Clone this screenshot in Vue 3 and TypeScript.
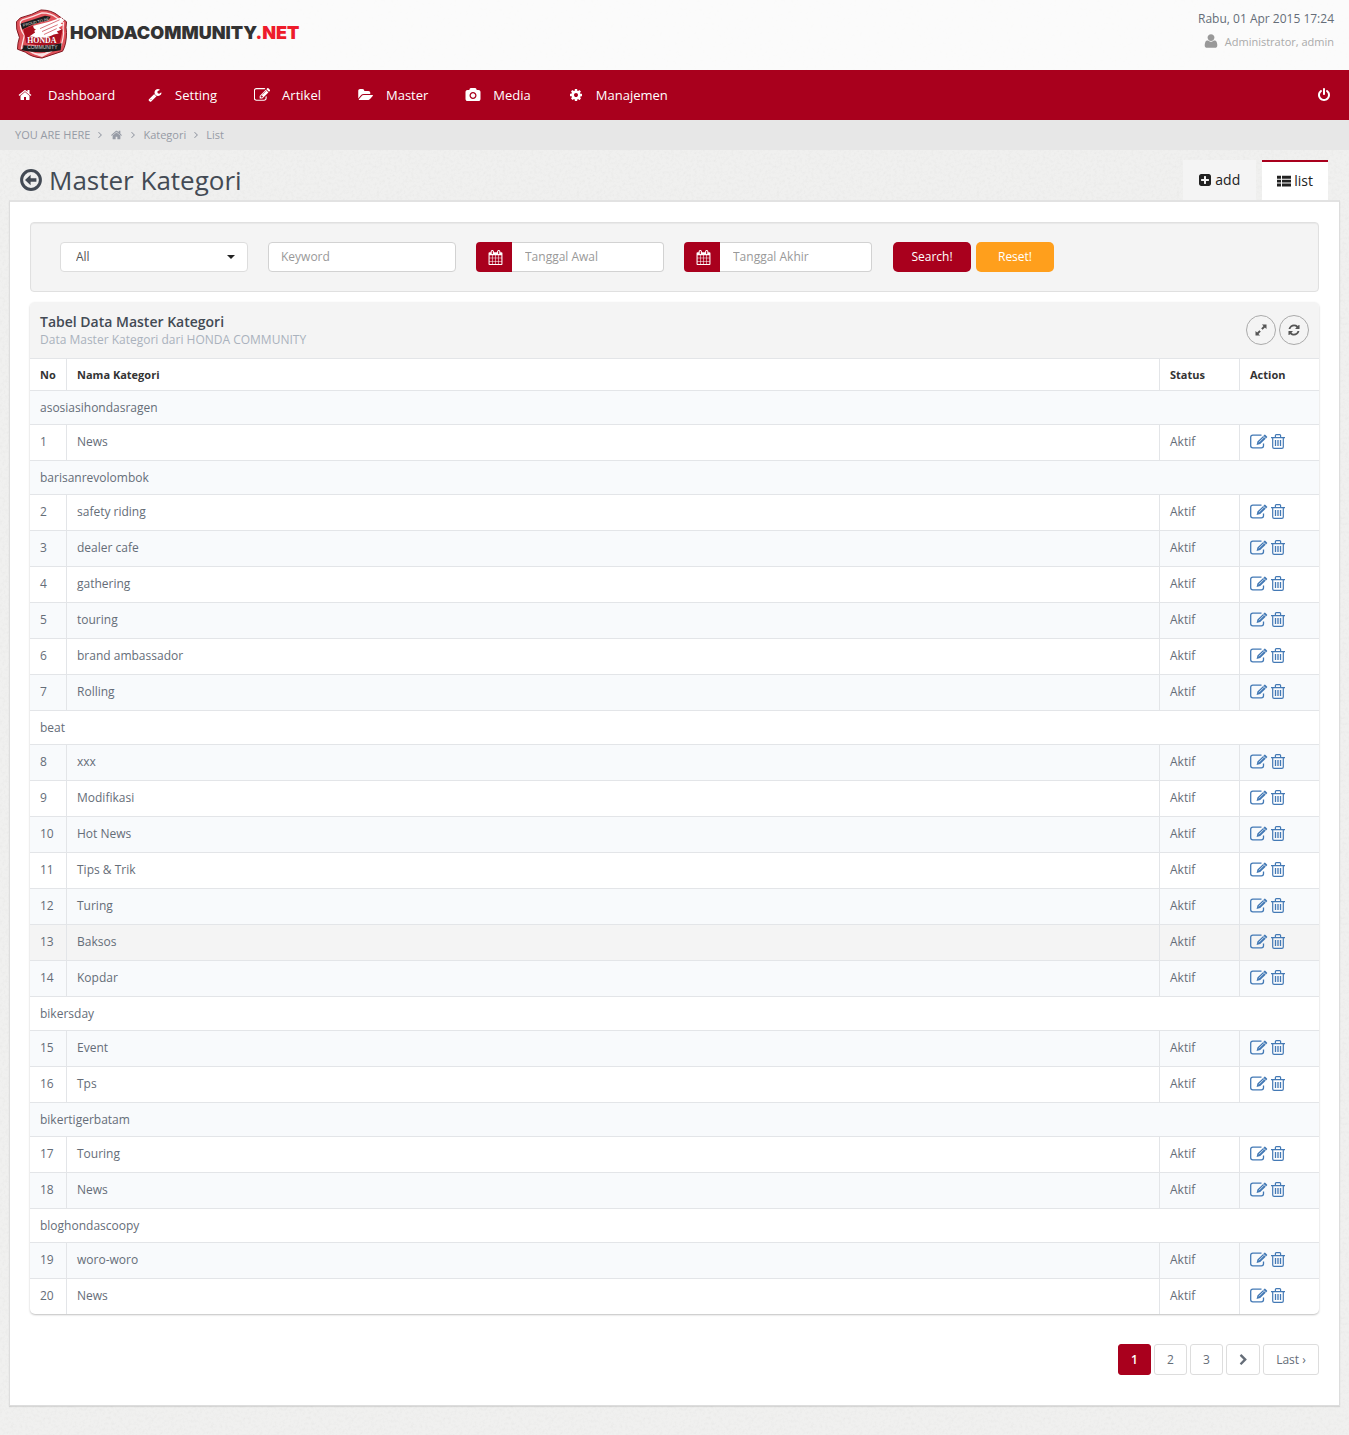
<script setup lang="ts">
import { ref } from 'vue'

interface MenuItem {
  label: string
  icon: string
  box: string
}

interface Row {
  no?: number
  name: string
  hovered?: boolean
}

const icons: Record<string, string> = {
  home: 'M1472 992v480q0 26-19 45t-45 19h-384v-384h-256v384h-384q-26 0-45-19t-19-45v-480q0-1 .5-3t.5-3l575-474 575 474q1 2 1 6zm223-69l-62 74q-8 9-21 11h-3q-13 0-21-7l-692-577-692 577q-12 8-24 7-13-2-21-11l-62-74q-8-10-7-23.5t11-21.5l719-599q32-26 76-26t76 26l244 204v-195q0-14 9-23t23-9h192q14 0 23 9t9 23v408l219 182q10 8 11 21.5t-7 23.5z',
  wrench: 'M448 1472q0-26-19-45t-45-19-45 19-19 45 19 45 45 19 45-19 19-45zm644-420l-682 682q-37 37-90 37-52 0-91-37l-106-108q-38-36-38-90 0-53 38-91l681-681q39 98 114.5 173.5t173.5 114.5zm634-435q0 39-23 106-47 134-164.5 217.5t-258.5 83.5q-185 0-316.5-131.5t-131.5-316.5 131.5-316.5 316.5-131.5q58 0 121.5 16.5t107.5 46.5q16 11 16 28t-16 28l-293 169v224l193 107q5-3 79-48.5t135.5-81 70.5-35.5q15 0 23.5 10t8.5 25z',
  edit: 'M888 1184l116-116-152-152-116 116v56h96v96h56zm440-720q-16-16-33 1l-350 350q-17 17-1 33t33-1l350-350q17-17 1-33zm80 594v190q0 119-84.5 203.5t-203.5 84.5h-832q-119 0-203.5-84.5t-84.5-203.5v-832q0-119 84.5-203.5t203.5-84.5h832q63 0 117 25 15 7 18 23 3 17-9 29l-49 49q-14 14-32 8-23-6-45-6h-832q-66 0-113 47t-47 113v832q0 66 47 113t113 47h832q66 0 113-47t47-113v-126q0-13 9-22l64-64q15-15 35-7t20 29zm-96-738l288 288-672 672h-288v-288zm444 132l-92 92-288-288 92-92q28-28 68-28t68 28l152 152q28 28 28 68t-28 68z',
  folder: 'M1815 952q0 31-31 66l-336 396q-43 51-120.5 86.5t-143.5 35.5h-1088q-34 0-60.5-13t-26.5-43q0-31 31-66l336-396q43-51 120.5-86.5t143.5-35.5h1088q34 0 60.5 13t26.5 43zm-343-344v160h-832q-94 0-197 47.5t-164 119.5l-337 396-5 6q0-4-.5-12.5t-.5-12.5v-960q0-92 66-158t158-66h320q92 0 158 66t66 158v32h544q92 0 158 66t66 158z',
  camera: 'M896 672q119 0 203.5 84.5t84.5 203.5-84.5 203.5-203.5 84.5-203.5-84.5-84.5-203.5 84.5-203.5 203.5-84.5zm704-416q106 0 181 75t75 181v896q0 106-75 181t-181 75h-1408q-106 0-181-75t-75-181v-896q0-106 75-181t181-75h224l51-136q19-49 69.5-84.5t103.5-35.5h512q53 0 103.5 35.5t69.5 84.5l51 136h224zm-704 1152q185 0 316.5-131.5t131.5-316.5-131.5-316.5-316.5-131.5-316.5 131.5-131.5 316.5 131.5 316.5 316.5 131.5z',
  cog: 'M1152 896q0-106-75-181t-181-75-181 75-75 181 75 181 181 75 181-75 75-181zm512-109v222q0 12-8 23t-20 13l-185 28q-19 54-39 91 35 50 107 138 10 12 10 25t-9 23q-27 37-99 108t-94 71q-12 0-26-9l-138-108q-44 23-91 38-16 136-29 186-7 28-36 28h-222q-14 0-24.5-8.5t-11.5-21.5l-28-184q-49-16-90-37l-141 107q-10 9-25 9-14 0-25-11-126-114-165-168-7-10-7-23 0-12 8-23 15-21 51-66.5t54-70.5q-27-50-41-99l-183-27q-13-2-21-12.5t-8-23.5v-222q0-12 8-23t19-13l186-28q14-46 39-92-40-57-107-138-10-12-10-24 0-10 9-23 26-36 98.5-107.5t94.5-71.5q13 0 26 10l138 107q44-23 91-38 16-136 29-186 7-28 36-28h222q14 0 24.5 8.5t11.5 21.5l28 184q49 16 90 37l142-107q9-9 24-9 13 0 25 10 129 119 165 170 7 8 7 22 0 12-8 23-15 21-51 66.5t-54 70.5q26 50 41 98l183 28q13 2 21 12.5t8 23.5z',
  power: 'M1664 896q0 156-61 298t-164 245-245 164-298 61-298-61-245-164-164-245-61-298q0-182 80.5-343t226.5-270q43-32 95.5-25t83.5 50q32 42 24.5 94.5t-49.5 84.5q-98 74-151.5 181t-53.5 228q0 104 40.5 198.5t109.5 163.5 163.5 109.5 198.5 40.5 198.5-40.5 163.5-109.5 109.5-163.5 40.5-198.5q0-121-53.5-228t-151.5-181q-42-32-49.5-84.5t24.5-94.5q31-43 84-50t95 25q146 109 226.5 270t80.5 343zm-640-768v640q0 52-38 90t-90 38-90-38-38-90v-640q0-52 38-90t90-38 90 38 38 90z',
  user: 'M1600 1405q0 120-73 189.5t-194 69.5h-874q-121 0-194-69.5t-73-189.5q0-53 3.5-103.5t14-109 26.5-108.5 43-97.5 62-81 85.5-53.5 111.5-20q9 0 42 21.5t74.5 48 108 48 133.5 21.5 133.5-21.5 108-48 74.5-48 42-21.5q61 0 111.5 20t85.5 53.5 62 81 43 97.5 26.5 108.5 14 109 3.5 103.5zm-320-893q0 159-112.5 271.5t-271.5 112.5-271.5-112.5-112.5-271.5 112.5-271.5 271.5-112.5 271.5 112.5 112.5 271.5z',
  angle: 'M1171 960q0 13-10 23l-466 466q-10 10-23 10t-23-10l-50-50q-10-10-10-23t10-23l393-393-393-393q-10-10-10-23t10-23l50-50q10-10 23-10t23 10l466 466q10 10 10 23z',
  plus: 'M1408 960v-128q0-26-19-45t-45-19h-320v-320q0-26-19-45t-45-19h-128q-26 0-45 19t-19 45v320h-320q-26 0-45 19t-19 45v128q0 26 19 45t45 19h320v320q0 26 19 45t45 19h128q26 0 45-19t19-45v-320h320q26 0 45-19t19-45zm256-544v960q0 119-84.5 203.5t-203.5 84.5h-960q-119 0-203.5-84.5t-84.5-203.5v-960q0-119 84.5-203.5t203.5-84.5h960q119 0 203.5 84.5t84.5 203.5z',
  refresh: 'M1639 1056q0 5-1 7-64 268-268 434.5t-478 166.5q-146 0-282.5-55t-243.5-157l-129 129q-19 19-45 19t-45-19-19-45v-448q0-26 19-45t45-19h448q26 0 45 19t19 45-19 45l-137 137q71 66 161 102t187 36q134 0 250-65t186-179q11-17 53-117 8-23 30-23h192q13 0 22.5 9.5t9.5 22.5zm25-800v448q0 26-19 45t-45 19h-448q-26 0-45-19t-19-45 19-45l138-138q-148-137-349-137-134 0-250 65t-186 179q-11 17-53 117-8 23-30 23h-199q-13 0-22.5-9.5t-9.5-22.5v-7q65-268 270-434.5t480-166.5q146 0 284 55.5t245 156.5l130-129q19-19 45-19t45 19 19 45z',
  calendar: 'M192 1664h288v-288h-288v288zm352 0h320v-288h-320v288zm-352-352h288v-320h-288v320zm352 0h320v-320h-320v320zm-352-384h288v-288h-288v288zm736 736h320v-288h-320v288zm-384-736h320v-288h-320v288zm768 736h288v-288h-288v288zm-384-352h320v-320h-320v320zm-352-864v-288q0-13-9.5-22.5t-22.5-9.5h-64q-13 0-22.5 9.5t-9.5 22.5v288q0 13 9.5 22.5t22.5 9.5h64q13 0 22.5-9.5t9.5-22.5zm736 864h288v-320h-288v320zm-384-384h320v-288h-320v288zm384 0h288v-288h-288v288zm32-480v-288q0-13-9.5-22.5t-22.5-9.5h-64q-13 0-22.5 9.5t-9.5 22.5v288q0 13 9.5 22.5t22.5 9.5h64q13 0 22.5-9.5t9.5-22.5zm384-64v1280q0 52-38 90t-90 38h-1408q-52 0-90-38t-38-90v-1280q0-52 38-90t90-38h128v-96q0-66 47-113t113-47h64q66 0 113 47t47 113v96h384v-96q0-66 47-113t113-47h64q66 0 113 47t47 113v96h128q52 0 90 38t38 90z',
  chevron: 'M1363 877l-742 742q-19 19-45 19t-45-19l-166-166q-19-19-19-45t19-45l531-531-531-531q-19-19-19-45t19-45l166-166q19-19 45-19t45 19l742 742q19 19 19 45t-19 45z',
}

const menu: MenuItem[] = [
  { label: 'Dashboard', icon: 'home', box: '0 0 1792 1792' },
  { label: 'Setting', icon: 'wrench', box: '0 0 1792 1792' },
  { label: 'Artikel', icon: 'edit', box: '64 128 1664 1536' },
  { label: 'Master', icon: 'folder', box: '0 0 1856 1792' },
  { label: 'Media', icon: 'camera', box: '-64 0 1920 1792' },
  { label: 'Manajemen', icon: 'cog', box: '0 0 1792 1792' },
]

const rows: Row[] = [
  { name: 'asosiasihondasragen' },
  { no: 1, name: 'News' },
  { name: 'barisanrevolombok' },
  { no: 2, name: 'safety riding' },
  { no: 3, name: 'dealer cafe' },
  { no: 4, name: 'gathering' },
  { no: 5, name: 'touring' },
  { no: 6, name: 'brand ambassador' },
  { no: 7, name: 'Rolling' },
  { name: 'beat' },
  { no: 8, name: 'xxx' },
  { no: 9, name: 'Modifikasi' },
  { no: 10, name: 'Hot News' },
  { no: 11, name: 'Tips & Trik' },
  { no: 12, name: 'Turing' },
  { no: 13, name: 'Baksos', hovered: true },
  { no: 14, name: 'Kopdar' },
  { name: 'bikersday' },
  { no: 15, name: 'Event' },
  { no: 16, name: 'Tps' },
  { name: 'bikertigerbatam' },
  { no: 17, name: 'Touring' },
  { no: 18, name: 'News' },
  { name: 'bloghondascoopy' },
  { no: 19, name: 'woro-woro' },
  { no: 20, name: 'News' },
]

const status = ref('All')
const keyword = ref('')
const dateFrom = ref('')
const dateTo = ref('')

function reset(): void {
  status.value = 'All'
  keyword.value = ''
  dateFrom.value = ''
  dateTo.value = ''
}
</script>

<template>
  <div class="page">
    <header class="top">
      <a class="brand" href="#">
        <svg class="badge" viewBox="0 0 54 52" aria-hidden="true">
          <path d="M5 9Q17 6 26 1q11 0 18 6l8 6q-1 6 0 11 0 12-4 19-9 3-21 7-11-1-17-6l-8-3q0-6 2-12Q0 20 1 13z" fill="#e0525a" stroke="#7d1620" stroke-width="1" />
          <path d="M7 11Q18 8 27 4q9 0 15 5l7 5q-1 6 0 11-1 10-4 15-9 2-18 7-9-1-14-5l-7-2 3-13Q4 20 5 13z" fill="none" stroke="#fbe3e4" stroke-width="1.3" />
          <path d="M8 21q8-5 19-5 12 0 21 5l-3 14-17 3-17-3z" fill="#a80f1e" />
          <path d="M5 15Q18 11 30 7l6 1-3 4Q19 14 7 21z" fill="#1b1b1b" />
          <path d="M8 37q15 2 39-2l-1 7q-20 4-40 0l2-3z" fill="#1b1b1b" />
          <path d="M49 8Q34 14 18 17q0 3 3 4-3 1-1 3l-6 4 13 1q7 0 12-3l5-1-2-2 5-2-3-2 5-3-3-1 4-4-3-1z" fill="#fff" />
          <path d="M25 20l20-9M27 23l16-7M29 26l13-6" stroke="#d8737a" stroke-width="1" />
          <path d="M16 45q11 1 22-2l-11 6z" fill="#f7e2e3" />
          <text x="12" y="35" font-family="Liberation Serif, serif" font-weight="700" font-size="8" fill="#fff">HONDA</text>
          <text x="12" y="41" font-family="Liberation Sans, sans-serif" font-size="5" fill="#ddd">COMMUNITY</text>
          <text x="8" y="18" transform="rotate(-14 8 18)" font-family="Liberation Sans, sans-serif" font-size="4" fill="#ddd">PROUD TO BE</text>
        </svg>
        <span class="wordmark">HONDACOMMUNITY<span class="net">.NET</span></span>
      </a>
      <div class="session">
        <span class="date">Rabu, 01 Apr 2015 17:24</span>
        <span class="account">
          <svg class="user" viewBox="0 0 1792 1792"><path :d="icons.user" /></svg>
          Administrator, admin
        </span>
      </div>
    </header>

    <nav class="menu">
      <a v-for="item in menu" :key="item.label" href="#">
        <svg class="mi" :viewBox="item.box"><path :d="icons[item.icon]" /></svg>{{ item.label }}
      </a>
      <button class="logout" type="button" aria-label="Logout">
        <svg class="mi" viewBox="0 0 1792 1792"><path :d="icons.power" /></svg>
      </button>
    </nav>

    <nav class="crumbs">
      <span>YOU ARE HERE</span>
      <svg class="sep" viewBox="400 356 960 1208"><path :d="icons.angle" /></svg>
      <a href="#" aria-label="Home"><svg class="crumb-home" viewBox="0 0 1792 1792"><path :d="icons.home" /></svg></a>
      <svg class="sep" viewBox="400 356 960 1208"><path :d="icons.angle" /></svg>
      <a href="#">Kategori</a>
      <svg class="sep" viewBox="400 356 960 1208"><path :d="icons.angle" /></svg>
      <a href="#">List</a>
    </nav>

    <div class="heading">
      <h1>
        <svg class="back" viewBox="0 0 22 22">
          <circle cx="11" cy="11" r="9.4" fill="none" stroke="#434a54" stroke-width="3" />
          <path d="M5 11l5.6-5.200v3.500h5.800v3.400h-5.800v3.500z" />
        </svg>
        Master Kategori
      </h1>
      <div class="tabs">
        <a class="tab" href="#"><svg class="ti" viewBox="128 128 1536 1536"><path :d="icons.plus" /></svg>add</a>
        <a class="tab active" href="#">
          <svg class="ti list" viewBox="0 0 14 12">
            <path d="M0 .8h4v2.9H0zM5 .8h9v2.9H5zM0 4.7h4v2.9H0zM5 4.7h9v2.9H5zM0 8.6h4v2.9H0zM5 8.6h9v2.9H5z" />
          </svg>list
        </a>
      </div>
    </div>

    <main class="panel">
      <form class="filter" @submit.prevent>
        <select v-model="status" class="field" aria-label="Status">
          <option>All</option>
          <option>Aktif</option>
        </select>
        <label class="group">
          <input v-model="keyword" type="text" placeholder="Keyword" aria-label="Keyword" />
        </label>
        <label class="group dated">
          <span class="addon"><svg viewBox="0 0 1792 1792"><path :d="icons.calendar" /></svg></span>
          <input v-model="dateFrom" type="text" placeholder="Tanggal Awal" aria-label="Tanggal Awal" />
        </label>
        <label class="group dated">
          <span class="addon"><svg viewBox="0 0 1792 1792"><path :d="icons.calendar" /></svg></span>
          <input v-model="dateTo" type="text" placeholder="Tanggal Akhir" aria-label="Tanggal Akhir" />
        </label>
        <div class="buttons">
          <button class="btn search" type="submit">Search!</button>
          <button class="btn reset" type="button" @click="reset">Reset!</button>
        </div>
      </form>

      <section class="card">
        <div class="card-head">
          <div>
            <h2>Tabel Data Master Kategori</h2>
            <p>Data Master Kategori dari HONDA COMMUNITY</p>
          </div>
          <div class="tools">
            <button type="button" aria-label="Expand">
              <svg viewBox="0 0 12 12"><path d="M11.5.5v4.600L9.900 3.500 7.600 5.800 6.200 4.400l2.300-2.300L6.900.5zM.5 11.500V6.900l1.600 1.600 2.300-2.300 1.400 1.400-2.300 2.300 1.600 1.600z" /></svg>
            </button>
            <button type="button" aria-label="Refresh">
              <svg viewBox="64 64 1664 1664"><path :d="icons.refresh" /></svg>
            </button>
          </div>
        </div>
        <table>
          <thead>
            <tr>
              <th class="no">No</th>
              <th>Nama Kategori</th>
              <th class="narrow">Status</th>
              <th class="narrow">Action</th>
            </tr>
          </thead>
          <tbody>
            <tr v-for="(row, i) in rows" :key="i" :class="{ hovered: row.hovered, site: !row.no }">
              <td v-if="!row.no" colspan="4">{{ row.name }}</td>
              <template v-else>
                <td>{{ row.no }}</td>
                <td>{{ row.name }}</td>
                <td>Aktif</td>
                <td>
                  <div class="actions">
                    <a href="#" aria-label="Edit">
                      <svg class="pen" viewBox="0 0 18 15" fill="none" stroke="currentColor">
                        <path d="M11.5 1.2H2.8Q.7 1.2.7 3.2v8.600q0 2 2.100 2h8.600q2.100 0 2.100-2V9.500" stroke-width="1.3" />
                        <path class="solid" d="M6.600 11l.8-3.400L14.200.9q.5-.5 1-.1l1.800 1.700q.5.5 0 1L10.200 10z" />
                        <path d="M8.900 8.300l5-5M13.200 1.900l2.900 2.800" stroke="#fff" stroke-width=".7" />
                      </svg>
                    </a>
                    <a href="#" aria-label="Delete">
                      <svg class="bin" viewBox="0 0 14 15" fill="none" stroke="currentColor">
                        <path d="M0 3.600h14M4.400 3.200V1.600q0-.9.9-.9h3.400q.9 0 .9.9v1.600M1.700 4v8.900q0 1.400 1.400 1.400h7.800q1.400 0 1.400-1.400V4" stroke-width="1.2" />
                        <path d="M4.500 6v6M7 6v6M9.500 6v6" stroke-width="1.3" />
                      </svg>
                    </a>
                  </div>
                </td>
              </template>
            </tr>
          </tbody>
        </table>
      </section>

      <nav class="pager" aria-label="Pagination">
        <a class="current" href="#">1</a>
        <a href="#">2</a>
        <a href="#">3</a>
        <a class="next" href="#" aria-label="Next"><svg viewBox="256 0 1280 1792"><path :d="icons.chevron" /></svg></a>
        <a class="last" href="#">Last ›</a>
      </nav>
    </main>
  </div>
</template>

<style>
body {
  background-color: #f0f0ef;
  background-image: url("data:image/svg+xml,%3Csvg xmlns='http://www.w3.org/2000/svg' width='200' height='200'%3E%3Cfilter id='n'%3E%3CfeTurbulence type='fractalNoise' baseFrequency='.35' numOctaves='3' stitchTiles='stitch'/%3E%3CfeColorMatrix values='0 0 0 0 .4 0 0 0 0 .4 0 0 0 0 .38 .2 0 0 0 -.09'/%3E%3C/filter%3E%3Crect width='200' height='200' filter='url(%23n)'/%3E%3C/svg%3E");
}
</style>

<style scoped>
* {
  box-sizing: border-box;
}

.page {
  padding-bottom: 29px;
  font: 12px/18px "Open Sans", sans-serif;
  color: #656d78;
}

a {
  color: inherit;
  text-decoration: none;
}

svg {
  display: block;
  flex: none;
}

svg:not([fill], .badge) path,
.solid {
  fill: currentColor;
}

.solid {
  stroke: none;
}

button,
input,
select {
  font: inherit;
  margin: 0;
}

.top {
  display: flex;
  justify-content: space-between;
  height: 70px;
  padding: 9px 15px;
  background: rgba(255, 255, 255, 0.75);
}

.brand {
  display: flex;
  gap: 1px;
}

.badge {
  width: 54px;
  height: 51px;
}

.wordmark {
  font: 900 18px/48px Inter, "Liberation Sans", sans-serif;
  color: #333;
}

.net {
  color: #ee1c2b;
}

.session {
  display: flex;
  flex-direction: column;
  align-items: flex-end;
  gap: 5px;
  padding-top: 1px;
}

.account {
  display: flex;
  gap: 6px;
  font-size: 11px;
  color: #aaa;
}

.user {
  width: 16px;
  height: 16px;
  color: #999;
}

.menu {
  display: flex;
  align-items: center;
  gap: 37px;
  height: 50px;
  padding: 0 17px;
  background: #a9001d;
  color: #fff;
  font-size: 13px;
}

.menu a {
  display: flex;
  align-items: center;
  gap: 12px;
}

.menu a:first-child {
  gap: 15px;
  margin-right: -5px;
}

.mi {
  width: 16px;
  height: 14px;
}

.logout {
  margin-left: auto;
  padding: 0;
  border: 0;
  background: none;
  color: #fff;
}

.crumbs {
  display: flex;
  align-items: center;
  gap: 7px;
  height: 30px;
  padding: 0 15px;
  background: #e7e7e7;
  color: #969ba5;
  font-size: 11px;
}

.sep {
  width: 6px;
  height: 8px;
}

.crumb-home {
  width: 13px;
  height: 12px;
}

.heading {
  display: flex;
  justify-content: space-between;
  align-items: flex-end;
  height: 50px;
  padding: 0 21px 0 20px;
}

h1 {
  display: flex;
  align-items: center;
  gap: 7px;
  margin: 0;
  font-size: 26px;
  line-height: 40px;
  font-weight: 400;
  color: #434a54;
}

.back {
  width: 22px;
  height: 22px;
}

.tabs {
  display: flex;
  gap: 6px;
  font-size: 14px;
  color: #222;
}

.tab {
  display: flex;
  align-items: center;
  gap: 4px;
  height: 40px;
  padding: 0 16px;
  background: #f4f4f4;
}

.tab.active {
  gap: 3px;
  padding: 0 15px;
  background: #fff;
  border-top: 2px solid #a9001d;
}

.ti {
  width: 12px;
  height: 12px;
}

.ti.list {
  width: 14px;
}

.panel {
  margin: 0 9px;
  padding: 20px;
  background: #fff;
  border: 1px solid #ddd;
  border-top: 2px solid #e2e2e2;
  box-shadow: 0 1px 1px rgba(0, 0, 0, 0.1);
}

.filter {
  display: flex;
  gap: 20px;
  padding: 19px 29px;
  background: #f4f4f4;
  border: 1px solid #e0e0e0;
  border-radius: 4px;
  box-shadow: inset 0 1px 1px rgba(0, 0, 0, 0.05);
}

.field,
.group {
  width: 188px;
  height: 30px;
}

.field,
.group input {
  padding: 0 12px;
  border: 1px solid #d2d2d2;
  border-radius: 4px;
  background: #fff;
  color: #555;
  outline: none;
}

select.field {
  appearance: none;
  padding: 0 15px;
  border-color: #ddd;
  background: #fff url("data:image/svg+xml,%3Csvg xmlns='http://www.w3.org/2000/svg' width='8' height='4'%3E%3Cpath d='M0 0h8L4 4z' fill='%23222'/%3E%3C/svg%3E") no-repeat right 12px center;
}

input::placeholder {
  color: #999;
  opacity: 1;
}

.group {
  display: flex;
}

.addon {
  display: flex;
  align-items: center;
  justify-content: center;
  flex: none;
  width: 36px;
  padding-left: 2px;
  background: #a9001d;
  border-radius: 4px 0 0 4px;
  color: #fff;
}

.addon svg {
  width: 15px;
  height: 15px;
}

.group input {
  flex: 1;
  min-width: 0;
}

.dated input {
  border-left-width: 0;
  padding-left: 13px;
  border-radius: 0 4px 4px 0;
}

.buttons {
  display: flex;
  gap: 5px;
  padding-left: 1px;
}

.btn {
  width: 78px;
  height: 30px;
  padding: 0;
  border: 0;
  border-radius: 5px;
  color: #fff;
}

.search {
  background: #a9001d;
}

.reset {
  background: #ff9f1c;
}

.card {
  margin-top: 10px;
  border-radius: 5px;
  overflow: hidden;
  box-shadow: 0 1px 2px rgba(0, 0, 0, 0.25);
}

.card-head {
  display: flex;
  justify-content: space-between;
  align-items: center;
  height: 56px;
  padding: 0 10px;
  background: #f4f4f4;
}

h2 {
  margin: 0;
  font-size: 14px;
  line-height: 20px;
  font-weight: 600;
  color: #434a54;
}

.card-head p {
  margin: 0;
  line-height: 16px;
  color: #aab2bd;
}

.tools {
  display: flex;
  gap: 3px;
}

.tools button {
  display: flex;
  align-items: center;
  justify-content: center;
  width: 30px;
  height: 30px;
  padding: 0;
  border: 1px solid #aaa;
  border-radius: 50%;
  background: none;
  color: #555;
}

.tools svg {
  width: 12px;
  height: 12px;
}

table {
  width: 100%;
  border-collapse: separate;
  border-spacing: 0;
  table-layout: fixed;
}

th,
td {
  height: 36px;
  padding: 0 10px 2px;
  border-top: 1px solid #e3e5e8;
  border-left: 1px solid #e3e5e8;
  text-align: left;
}

th:first-child,
td:first-child {
  border-left: 0;
}

th {
  height: 32px;
  padding-bottom: 0;
  font-size: 11px;
  font-weight: 700;
  color: #333;
}

.no {
  width: 36px;
}

.narrow {
  width: 80px;
}

.site td {
  height: 34px;
  padding-bottom: 0;
}

tbody tr:nth-child(odd) {
  background: #f8fafc;
}

tbody tr.hovered {
  background: #f4f4f4;
}

.actions {
  display: flex;
  align-items: center;
  gap: 3px;
  color: #4379b5;
}

.pen {
  width: 18px;
  height: 15px;
}

.bin {
  width: 14px;
  height: 15px;
}

.pager {
  display: flex;
  justify-content: flex-end;
  gap: 3px;
  padding: 30px 0 10px;
}

.pager a {
  display: flex;
  align-items: center;
  justify-content: center;
  width: 33px;
  height: 31px;
  border: 1px solid #ddd;
  border-radius: 3px;
}

.pager .current {
  background: #a9001d;
  border-color: #a9001d;
  color: #fff;
  font-weight: 600;
}

.pager .next {
  width: 34px;
}

.pager .last {
  width: 56px;
}

.pager svg {
  width: 9px;
  height: 12px;
}
</style>
